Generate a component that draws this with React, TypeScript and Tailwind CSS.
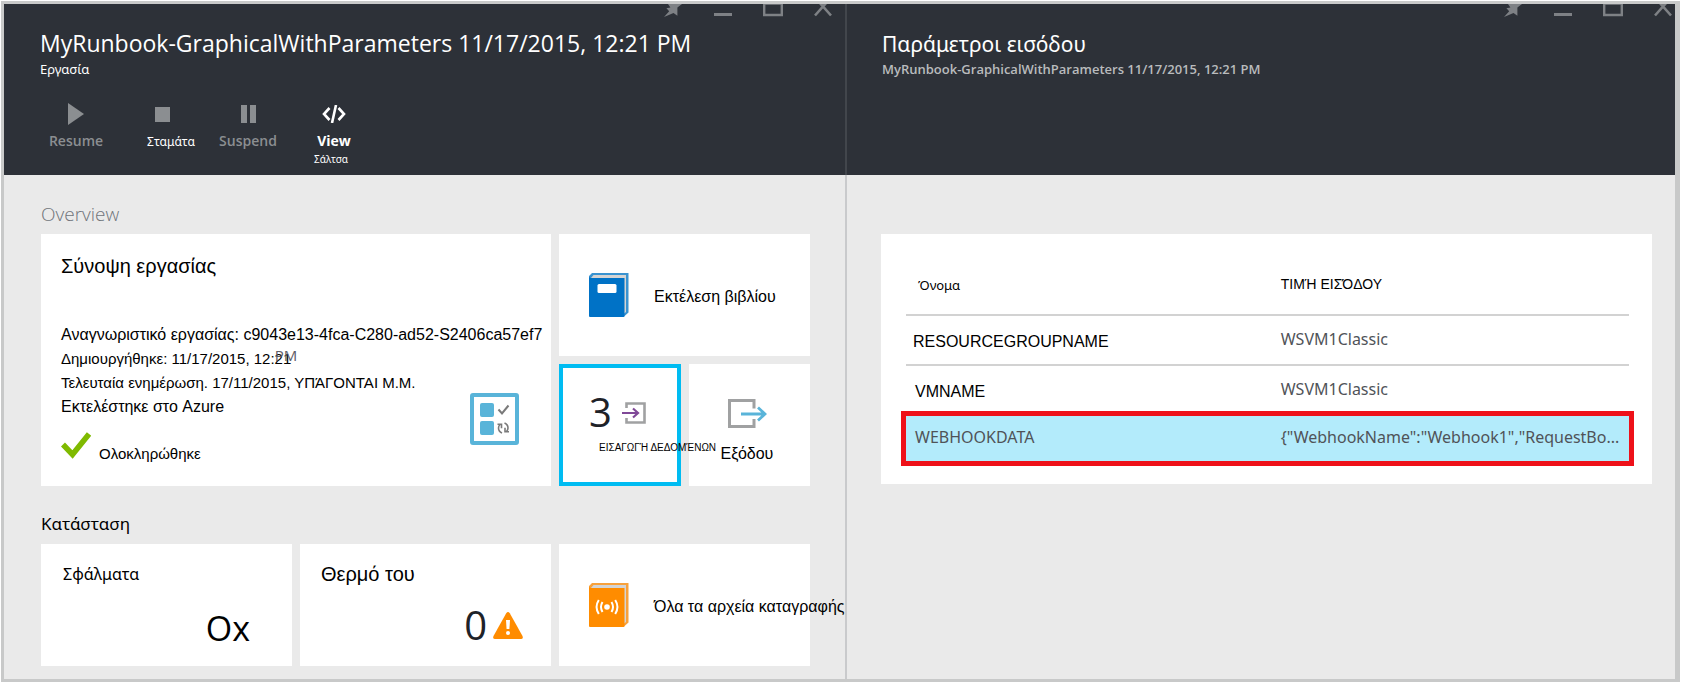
import type { ReactNode } from "react";

const SANS = "font-['Noto_Sans','Open_Sans',sans-serif]";
const UI = "font-['Open_Sans','Noto_Sans',sans-serif]";

function WindowControls({ className }: { className: string }) {
  return (
    <div className={`flex h-[13px] justify-end gap-[30px] overflow-hidden text-[#7e8185] ${className}`}>
      <button type="button" aria-label="Pin" className="h-[13px] w-5">
        <svg width="20" height="13" viewBox="0 0 20 13" fill="currentColor">
          <path d="M5 0H19l-4.600 3.400v8.400l-3.900-2.800L1 13l5.200-5.800L3.400 4.200l4-.8z" />
        </svg>
      </button>
      <button type="button" aria-label="Minimize" className="h-[13px] w-5">
        <svg width="20" height="13" viewBox="0 0 20 13">
          <path d="M1 10.500h18" stroke="currentColor" strokeWidth="3" />
        </svg>
      </button>
      <button type="button" aria-label="Maximize" className="h-[13px] w-5">
        <svg width="20" height="13" viewBox="0 0 20 13" fill="none">
          <path d="M1.200-2v13h17.600V-2" stroke="currentColor" strokeWidth="2.400" />
          <path d="M0 .3h20" stroke="currentColor" strokeWidth="1" />
        </svg>
      </button>
      <button type="button" aria-label="Close" className="h-[13px] w-5">
        <svg width="20" height="13" viewBox="0 0 20 13" fill="none">
          <path d="M2 11.500L14-2M18 11.500L6-2" stroke="currentColor" strokeWidth="2.600" />
        </svg>
      </button>
    </div>
  );
}

function Command({ icon, className, children }: { icon: ReactNode; className: string; children: ReactNode }) {
  return (
    <button type="button" className={`flex flex-col items-center ${className}`}>
      <span className="flex h-[31px] items-center pb-[3px]">{icon}</span>
      {children}
    </button>
  );
}

function Book({ color, edge, children }: { color: string; edge: string; children: ReactNode }) {
  return (
    <svg width="40" height="44" viewBox="0 0 40 44" className="shrink-0">
      <path d="M3 0h36.500v39.500L35 43.500V5H0V3z" fill={edge} />
      <path d="M4.500 2H37v37l-2.500 2V5H2z" fill="#d4d4d4" />
      <path d="M0 3.500Q.5 5 2 5h33.500v38q0 1-1 1H1q-1 0-1-1z" fill={color} />
      {children}
    </svg>
  );
}

function SectionTitle({ className, children }: { className: string; children: ReactNode }) {
  return <h2 className={`mb-2 leading-6 ${className}`}>{children}</h2>;
}

export default function App() {
  return (
    <div className="bg-white pt-px pr-[3px] pl-px font-['Liberation_Sans',Arial,sans-serif] text-black">
      <div className="grid min-h-[681px] grid-cols-[843fr_828fr] border-y-[3px] border-r-[5px] border-l-[3px] border-[#c8c9c9] bg-[#eaeaea]">
        <section className="flex min-w-0 flex-col border-r-2 border-[#c9cacc]">
          <header className="-mr-0.5 h-[171px] border-r-2 border-[#42464c] bg-[#2d3138] text-white">
            <WindowControls className="pr-3" />
            <div className="px-9 pt-[10px]">
              <h1 className={`truncate text-[23px] leading-8 ${UI}`}>
                MyRunbook-GraphicalWithParameters 11/17/2015, 12:21 PM
              </h1>
              <p className={`text-[13px] leading-5 ${SANS}`}>Εργασία</p>
            </div>
            <nav className="grid grid-cols-[repeat(4,86px)] items-start pt-[21px] pl-[29px]">
              <Command
                className="text-[#8b8e91]"
                icon={
                  <svg width="16" height="22" viewBox="0 0 16 22" fill="currentColor">
                    <path d="M0 0l16 11L0 22z" />
                  </svg>
                }
              >
                <span className={`text-[14px] leading-5 font-semibold ${UI}`}>Resume</span>
              </Command>
              <Command
                className="text-white"
                icon={<span className="size-[15px] bg-[#8b8e91]" />}
              >
                <span className={`pt-px pl-[18px] text-[12px] leading-5 ${SANS}`}>Σταμάτα</span>
              </Command>
              <Command
                className="text-[#8b8e91]"
                icon={
                  <svg width="15" height="18" viewBox="0 0 15 18" fill="currentColor">
                    <path d="M0 0h6v18H0zM9 0h6v18H9z" />
                  </svg>
                }
              >
                <span className={`text-[14px] leading-5 font-semibold ${UI}`}>Suspend</span>
              </Command>
              <Command
                className="text-white"
                icon={
                  <svg width="24" height="18" viewBox="0 0 24 18" fill="none" stroke="currentColor" strokeWidth="2.600">
                    <path d="M7.500 3L2 9l5.500 6M16.500 3L22 9l-5.500 6M14 0l-4 18" />
                  </svg>
                }
              >
                <span className={`text-[14px] leading-5 font-bold ${UI}`}>View</span>
                <span className={`pr-1.5 text-[10px] leading-4 ${SANS}`}>Σάλτσα</span>
              </Command>
            </nav>
          </header>

          <div className="pt-[27px] pr-[35px] pb-3 pl-[37px]">
            <SectionTitle className={`text-[19px] font-light text-[#70747a] ${UI}`}>Overview</SectionTitle>
            <div className="grid auto-rows-[122px] grid-cols-6 gap-2">
              <article className="col-span-4 row-span-2 flex flex-col bg-white px-5 pt-5">
                <h3 className="text-[20px] leading-6">Σύνοψη εργασίας</h3>
                <div className="mt-[45px] text-[15px] leading-6 whitespace-nowrap">
                  <p className="text-[16px]">Αναγνωριστικό εργασίας: c9043e13-4fca-C280-ad52-S2406ca57ef7</p>
                  <p>
                    Δημιουργήθηκε: 11/17/2015, 12:21
                    <span className={`relative inline-block w-0 ${UI}`}>
                      <span className="absolute right-[-6px] bottom-[-3px] text-[15px] text-[#5f6068]">PM</span>
                    </span>
                  </p>
                  <div className="flex justify-between">
                    <div>
                      <p>Τελευταία ενημέρωση. 17/11/2015, ΥΠΆΓΟΝΤΑΙ Μ.Μ.</p>
                      <p className="text-[16px]">Εκτελέστηκε στο Azure</p>
                      <div className="flex pt-[13px]">
                        <svg width="30" height="27" viewBox="0 0 30 27" fill="none" className="mr-2">
                          <path d="M2 12.500l9.500 10L28 2" stroke="#7fba00" strokeWidth="5.500" />
                        </svg>
                        <p className="pt-[10px]">Ολοκληρώθηκε</p>
                      </div>
                    </div>
                    <svg width="49" height="52" viewBox="0 0 49 52" fill="none" className="mt-[22px] mr-[12px]">
                      <rect x="2" y="2" width="45" height="48" rx="1" stroke="#59b4d9" strokeWidth="4" />
                      <rect x="10" y="10" width="14" height="14" rx="2" fill="#59b4d9" />
                      <rect x="10" y="28" width="14" height="14" rx="2" fill="#59b4d9" />
                      <path d="M28.500 16.500l3.500 4 6.500-8" stroke="#7a7a7a" strokeWidth="2" />
                      <path
                        d="M32 40q-3.500-1.500-3.500-5 0-2 1.500-3.500M27.500 31.200h4v4M34.500 30q3.500 1.500 3.500 5 0 2-1.500 3.500M39 38.800h-4v-4"
                        stroke="#7a7a7a"
                        strokeWidth="1.600"
                      />
                    </svg>
                  </div>
                </div>
              </article>

              <button type="button" className="col-span-2 flex items-center bg-white pl-[30px] text-left">
                <Book color="#0072c6" edge="#3a93d0">
                  <rect x="8.500" y="11" width="19" height="9" rx="1.500" fill="#fff" />
                </Book>
                <span className="pt-[3px] pl-[25px] text-[16px] leading-6 whitespace-nowrap">Εκτέλεση βιβλίου</span>
              </button>

              <button
                type="button"
                className="relative z-10 flex min-w-0 flex-col items-start border-4 border-[#00bcf2] bg-white pt-6 pl-[26px]"
              >
                <span className="flex items-center">
                  <span className={`text-[40px] leading-10 font-medium text-[#1e2228] ${UI}`}>3</span>
                  <svg width="24" height="22" viewBox="0 0 24 22" fill="none" className="mt-0.5 ml-[10px]">
                    <path d="M4.500 6V1.500h18v19h-18V16" stroke="#a0a1a2" strokeWidth="2.600" />
                    <path d="M0 11h15M11 6.500l5 4.500-5 4.500" stroke="#804998" strokeWidth="2.200" />
                  </svg>
                </span>
                <span className="mt-2 ml-[10px] text-[10px] leading-4 whitespace-nowrap">ΕΙΣΑΓΩΓΉ ΔΕΔΟΜΈΝΩΝ</span>
              </button>

              <button type="button" className="flex min-w-0 flex-col items-start bg-white pt-[35px] pl-8">
                <svg width="39" height="30" viewBox="0 0 39 30" fill="none" className="ml-[7px]">
                  <path d="M26 9.500V1.500H1.500v26H26v-7.500" stroke="#a0a1a2" strokeWidth="3" />
                  <path d="M13 15h24M30 8.500l7 6.500-7 6.500" stroke="#59b4d9" strokeWidth="2.800" />
                </svg>
                <span className="mt-[13px] text-[16px] leading-6">Εξόδου</span>
              </button>
            </div>

            <SectionTitle className={`mt-[26px] text-[17px] ${SANS}`}>Κατάσταση</SectionTitle>
            <div className="grid auto-rows-[122px] grid-cols-3 gap-2">
              <button type="button" className="flex flex-col items-start justify-between bg-white pt-[18px] pr-[42px] pb-[18px] pl-[22px]">
                <span className={`text-[16px] leading-6 ${SANS}`}>Σφάλματα</span>
                <span className={`self-end text-[34px] leading-10 ${UI}`}>Ox</span>
              </button>
              <button type="button" className="flex flex-col items-start justify-between bg-white pt-[18px] pr-7 pb-[21px] pl-[21px]">
                <span className="text-[20px] leading-6">Θερμό του</span>
                <span className="flex items-center self-end">
                  <span className={`text-[40px] leading-10 font-medium text-[#1e2228] ${UI}`}>0</span>
                  <svg width="30" height="27" viewBox="0 0 30 27" className="ml-[6px]">
                    <path d="M13.200 1.200q1.800-2.200 3.600 0L29.500 24q1 3-1.500 3H2q-2.500 0-1.500-3z" fill="#ff8c00" />
                    <path d="M13 8h4l-.6 9h-2.800z" fill="#fff" />
                    <circle cx="15" cy="21" r="2" fill="#fff" />
                  </svg>
                </span>
              </button>
              <button type="button" className="flex items-center bg-white pl-[30px] text-left">
                <Book color="#ff8c00" edge="#f7a13c">
                  <circle cx="18" cy="24" r="2.800" fill="#fff" />
                  <path
                    d="M13.500 19q-3 5 0 10M22.500 19q3 5 0 10M9.800 17q-4.500 7 0 14M26.200 17q4.500 7 0 14"
                    fill="none"
                    stroke="#fff"
                    strokeWidth="2"
                  />
                </Book>
                <span className="pt-[3px] pl-[25px] text-[16px] leading-6 whitespace-nowrap">Όλα τα αρχεία καταγραφής</span>
              </button>
            </div>
          </div>
        </section>

        <section className="flex min-w-0 flex-col">
          <header className="h-[171px] bg-[#2d3138] text-white">
            <WindowControls className="pr-0.5" />
            <div className="px-[35px] pt-[10px]">
              <h1 className={`pt-0.5 text-[21px] leading-[30px] ${SANS}`}>Παράμετροι εισόδου</h1>
              <p className={`truncate text-[13px] leading-5 font-semibold text-[#b9bbbd] ${UI}`}>
                MyRunbook-GraphicalWithParameters 11/17/2015, 12:21 PM
              </p>
            </div>
          </header>

          <div className="px-[23px] pt-[59px] pl-[34px]">
            <div className="bg-white pt-5 pr-[23px] pb-[23px] pl-[25px]">
              <table className={`w-full table-fixed border-collapse text-left text-[16px] text-[#505358] ${SANS}`}>
                <thead>
                  <tr className="h-[61px] border-b-2 border-[#d2d2d2] text-black">
                    <th className="w-[51%] pt-1 pl-3 text-[13px] font-normal">Όνομα</th>
                    <th className="pl-[6px] font-['Liberation_Sans',Arial,sans-serif] text-[14px] font-normal">
                      ΤΙΜΉ ΕΙΣΌΔΟΥ
                    </th>
                  </tr>
                </thead>
                <tbody>
                  <tr className="h-[50px] border-b-2 border-[#d2d2d2]">
                    <td className="pt-1 pl-[7px] font-['Liberation_Sans',Arial,sans-serif] text-black">
                      RESOURCEGROUPNAME
                    </td>
                    <td className="pb-0.5 pl-[6px]">WSVM1Classic</td>
                  </tr>
                  <tr className="h-[51px]">
                    <td className="pt-0.5 pl-[9px] font-['Liberation_Sans',Arial,sans-serif] text-black">VMNAME</td>
                    <td className="pb-1 pl-[6px]">WSVM1Classic</td>
                  </tr>
                  <tr className="h-[45px] bg-[#b3ebfb] outline-[5px] outline-[#ee1119]">
                    <td className="pb-1 pl-[9px]">WEBHOOKDATA</td>
                    <td className="pb-1 pl-[6px] whitespace-nowrap">{'{"WebhookName":"Webhook1","RequestBo...'}</td>
                  </tr>
                </tbody>
              </table>
            </div>
          </div>
        </section>
      </div>
    </div>
  );
}
